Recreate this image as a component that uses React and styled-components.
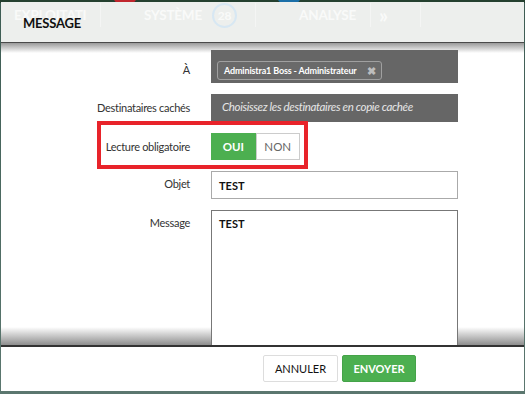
import styled, { createGlobalStyle } from "styled-components";

const GlobalStyle = createGlobalStyle`
  html, body {
    margin: 0;
    padding: 0;
  }
  body {
    font-family: Lato, "Open Sans", sans-serif;
    background: #3a5a50;
  }
`;

const Screen = styled.div`
  position: relative;
  width: 525px;
  height: 394px;
  overflow: hidden;
  background: linear-gradient(#24402f 0, #24402f 3px, #3d5c53 3px, #5b776f 100%);
`;

const Dots = styled.div`
  display: flex;
  gap: 138px;
  padding-left: 112px;
`;

const NavDot = styled.span`
  width: 26px;
  height: 26px;
  margin-top: -20px;
  border-radius: 50%;
  background: ${({ color }) => color};
`;

const Modal = styled.div`
  position: absolute;
  left: 1px;
  top: 2px;
  width: 523px;
  height: 389px;
  display: flex;
  flex-direction: column;
`;

const Header = styled.div`
  position: relative;
  height: 40px;
  flex-shrink: 0;
  display: flex;
  align-items: center;
  padding-left: 22px;
  background: #edefed;
  border-bottom: 1px solid #4a4a4a;
  font-size: 13px;
  font-weight: 700;
  letter-spacing: -0.2px;
  color: #111;
`;

const GhostNav = styled.div`
  position: absolute;
  left: 13px;
  top: 1px;
  height: 24px;
  display: flex;
  align-items: center;
  color: rgba(255, 255, 255, 0.7);
  font-size: 13.5px;
  font-weight: 700;
  letter-spacing: -0.2px;
  pointer-events: none;
`;

const GhostItem = styled.span`
  display: flex;
  align-items: center;
  gap: 10px;
  width: ${({ w }) => w}px;
  padding-left: ${({ pad }) => pad || 0}px;
  height: 24px;
  box-sizing: border-box;
  border-right: 1px solid rgba(255, 255, 255, 0.4);
  font-size: ${({ big }) => (big ? "20px" : "inherit")};
`;

const GhostBadge = styled.span`
  width: 25px;
  height: 25px;
  box-sizing: border-box;
  border-radius: 50%;
  border: 2px solid rgba(205, 228, 245, 0.7);
  display: grid;
  place-items: center;
  font-size: 12px;
`;

const Title = styled.span`
  position: relative;
  margin-top: 2px;
`;

const Body = styled.div`
  height: 304px;
  flex-shrink: 0;
  overflow: hidden;
  padding-top: 7px;
  box-sizing: border-box;
  background:
    linear-gradient(#9a9a9a, rgba(255, 255, 255, 0) 10px),
    linear-gradient(0deg, #8e8e8e, rgba(255, 255, 255, 0) 18px),
    #fff;
  border-bottom: 2px solid #333;
`;

const Form = styled.div`
  display: grid;
  grid-template-columns: 189px 247px;
  column-gap: 21px;
  row-gap: 11px;
  align-items: start;
`;

const Label = styled.div`
  text-align: right;
  font-size: 11px;
  letter-spacing: -0.3px;
  color: #333;
  padding-top: ${({ top }) => top}px;
`;

const DarkField = styled.div`
  display: flex;
  align-items: ${({ center }) => (center ? "center" : "flex-end")};
  height: ${({ h }) => h}px;
  box-sizing: border-box;
  padding: 0 6px 3px;
  background: #666;
`;

const Chip = styled.span`
  display: flex;
  align-items: center;
  gap: 10px;
  height: 19px;
  box-sizing: border-box;
  padding: 0 6px;
  border: 1px solid #a0a0a0;
  border-radius: 3px;
  background: #6a6a6a;
  color: #fff;
  font-size: 9px;
  font-weight: 700;
  letter-spacing: -0.15px;
  white-space: nowrap;
`;

const ChipClose = styled.span`
  color: #bdbdbd;
  font-size: 11px;
`;

const Placeholder = styled.span`
  padding-left: 5px;
  color: #e6e6e6;
  font-size: 11.5px;
  font-style: italic;
  letter-spacing: -0.35px;
  white-space: nowrap;
`;

const ToggleRow = styled.div`
  display: contents;
`;

const Highlight = styled.div`
  position: relative;
  &::after {
    content: "";
    position: absolute;
    left: 96px;
    top: -12px;
    width: 211px;
    height: 48px;
    border: 4px solid #e8232a;
    box-sizing: border-box;
    pointer-events: none;
  }
`;

const Toggle = styled.div`
  display: flex;
  width: 89px;
  height: 27px;
`;

const ToggleOption = styled.span`
  flex: 1;
  display: grid;
  place-items: center;
  font-size: 11.5px;
  font-weight: ${({ active }) => (active ? 700 : 400)};
  color: ${({ active }) => (active ? "#fff" : "#666")};
  background: ${({ active }) => (active ? "#4caf50" : "#fff")};
  border: 1px solid ${({ active }) => (active ? "#4caf50" : "#ccc")};
`;

const TextInput = styled.div`
  height: 28px;
  box-sizing: border-box;
  padding: 0 7px;
  display: flex;
  align-items: center;
  border: 1px solid #aaa;
  font-size: 11px;
  font-weight: 700;
  color: #111;
`;

const TextArea = styled.div`
  height: 200px;
  box-sizing: border-box;
  padding: 6px 7px;
  border: 1px solid #777;
  background: #fff;
  font-size: 11px;
  font-weight: 700;
  color: #111;
`;

const Footer = styled.div`
  flex: 1;
  display: flex;
  align-items: center;
  gap: 4px;
  padding-left: 262px;
  padding-bottom: 1px;
  background: #fff;
`;

const Button = styled.button`
  height: 27px;
  width: ${({ w }) => w}px;
  font-family: Lato, sans-serif;
  font-size: 11px;
  font-weight: ${({ primary }) => (primary ? 700 : 400)};
  color: ${({ primary }) => (primary ? "#fff" : "#111")};
  background: ${({ primary }) => (primary ? "#4caf50" : "#fff")};
  border: 1px solid ${({ primary }) => (primary ? "#45a349" : "#ddd")};
  border-radius: 2px;
  padding: 0;
`;

export default function App() {
  return (
    <>
      <GlobalStyle />
      <Screen>
        <Dots>
          <NavDot color="#c0262d" />
          <NavDot color="#1b6fa8" />
        </Dots>
        <Modal>
          <Header>
            <GhostNav>
              <GhostItem w={87}>EXPLOITATI</GhostItem>
              <GhostItem w={155} pad={43}>
                SYSTÈME
                <GhostBadge>28</GhostBadge>
              </GhostItem>
              <GhostItem w={115} pad={43}>
                ANALYSE
              </GhostItem>
              <GhostItem w={50} pad={8} big>
                »
              </GhostItem>
            </GhostNav>
            <Title>MESSAGE</Title>
          </Header>
          <Body>
            <Form>
              <Label top={13}>À</Label>
              <DarkField h={33}>
                <Chip>
                  Administra1 Boss - Administrateur
                  <ChipClose>✖</ChipClose>
                </Chip>
              </DarkField>

              <Label top={7}>Destinataires cachés</Label>
              <DarkField h={28} center>
                <Placeholder>Choisissez les destinataires en copie cachée</Placeholder>
              </DarkField>

              <ToggleRow>
                <Highlight>
                  <Label top={7}>Lecture obligatoire</Label>
                </Highlight>
                <Toggle>
                  <ToggleOption active>OUI</ToggleOption>
                  <ToggleOption>NON</ToggleOption>
                </Toggle>
              </ToggleRow>

              <Label top={6}>Objet</Label>
              <TextInput>TEST</TextInput>

              <Label top={6}>Message</Label>
              <TextArea>TEST</TextArea>
            </Form>
          </Body>
          <Footer>
            <Button w={75}>ANNULER</Button>
            <Button w={74} primary>
              ENVOYER
            </Button>
          </Footer>
        </Modal>
      </Screen>
    </>
  );
}
